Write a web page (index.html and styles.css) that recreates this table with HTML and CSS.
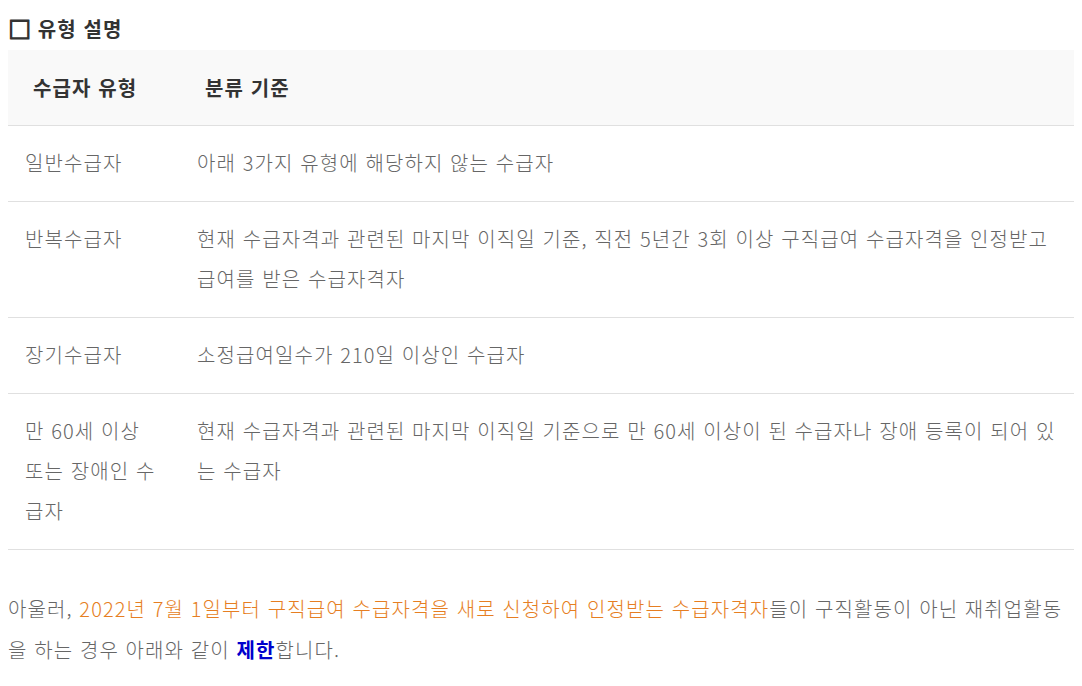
FILE: index.html
```html
<!DOCTYPE html>
<html lang="ko">
<head>
<meta charset="utf-8">
<link rel="stylesheet" href="styles.css">
</head>
<body>
<h4 class="title"><span class="box">☐</span> 유형 설명</h4>
<table class="type-table">
  <thead>
    <tr><th class="col-type">수급자 유형</th><th>분류 기준</th></tr>
  </thead>
  <tbody>
    <tr><td>일반수급자</td><td>아래 3가지 유형에 해당하지 않는 수급자</td></tr>
    <tr><td>반복수급자</td><td>현재 수급자격과 관련된 마지막 이직일 기준, 직전 5년간 3회 이상 구직급여 수급자격을 인정받고 급여를 받은 수급자격자</td></tr>
    <tr><td>장기수급자</td><td>소정급여일수가 210일 이상인 수급자</td></tr>
    <tr><td>만 60세 이상 또는 장애인 수급자</td><td>현재 수급자격과 관련된 마지막 이직일 기준으로 만 60세 이상이 된 수급자나 장애 등록이 되어 있는 수급자</td></tr>
  </tbody>
</table>
<p class="note">아울러, <span class="hl">2022년 7월 1일부터 구직급여 수급자격을 새로 신청하여 인정받는 수급자격자</span>들이 구직활동이 아닌 재취업활동을 하는 경우 아래와 같이 <strong class="limit">제한</strong>합니다.</p>
</body>
</html>
```
FILE: styles.css
```css
body {
  margin: 8px;
  background: #fff;
  font-family: "Noto Sans CJK KR", "Noto Sans", sans-serif;
  font-weight: 300;
  color: #666;
  font-size: 20px;
  letter-spacing: 1.1px;
}
.title {
  margin: 0;
  height: 42px;
  line-height: 42px;
  font-size: 20px;
  font-weight: bold;
  color: #333;
}
.title .box {
  font-size: 26px;
  line-height: 1;
  letter-spacing: 0;
  vertical-align: -2px;
}
.type-table {
  width: 1066px;
  border-collapse: collapse;
  font-size: 20px;
}
.type-table th {
  background: #f9f9f9;
  color: #333;
  font-weight: bold;
  text-align: left;
  height: 75px;
  padding: 0 0 0 25px;
  border-bottom: 1px solid #e0e0e0;
  box-sizing: border-box;
}
.type-table th.col-type { width: 172px; }
.type-table td {
  vertical-align: top;
  padding: 17px 17px 18px 17px;
  line-height: 40px;
  border-bottom: 1px solid #e0e0e0;
}
.type-table td:first-child { width: 138px; }
.note {
  margin: 38px 0 0;
  line-height: 41px;
}
.hl { color: #e67e22; }
.limit { color: #0000cc; font-weight: bold; }
```
